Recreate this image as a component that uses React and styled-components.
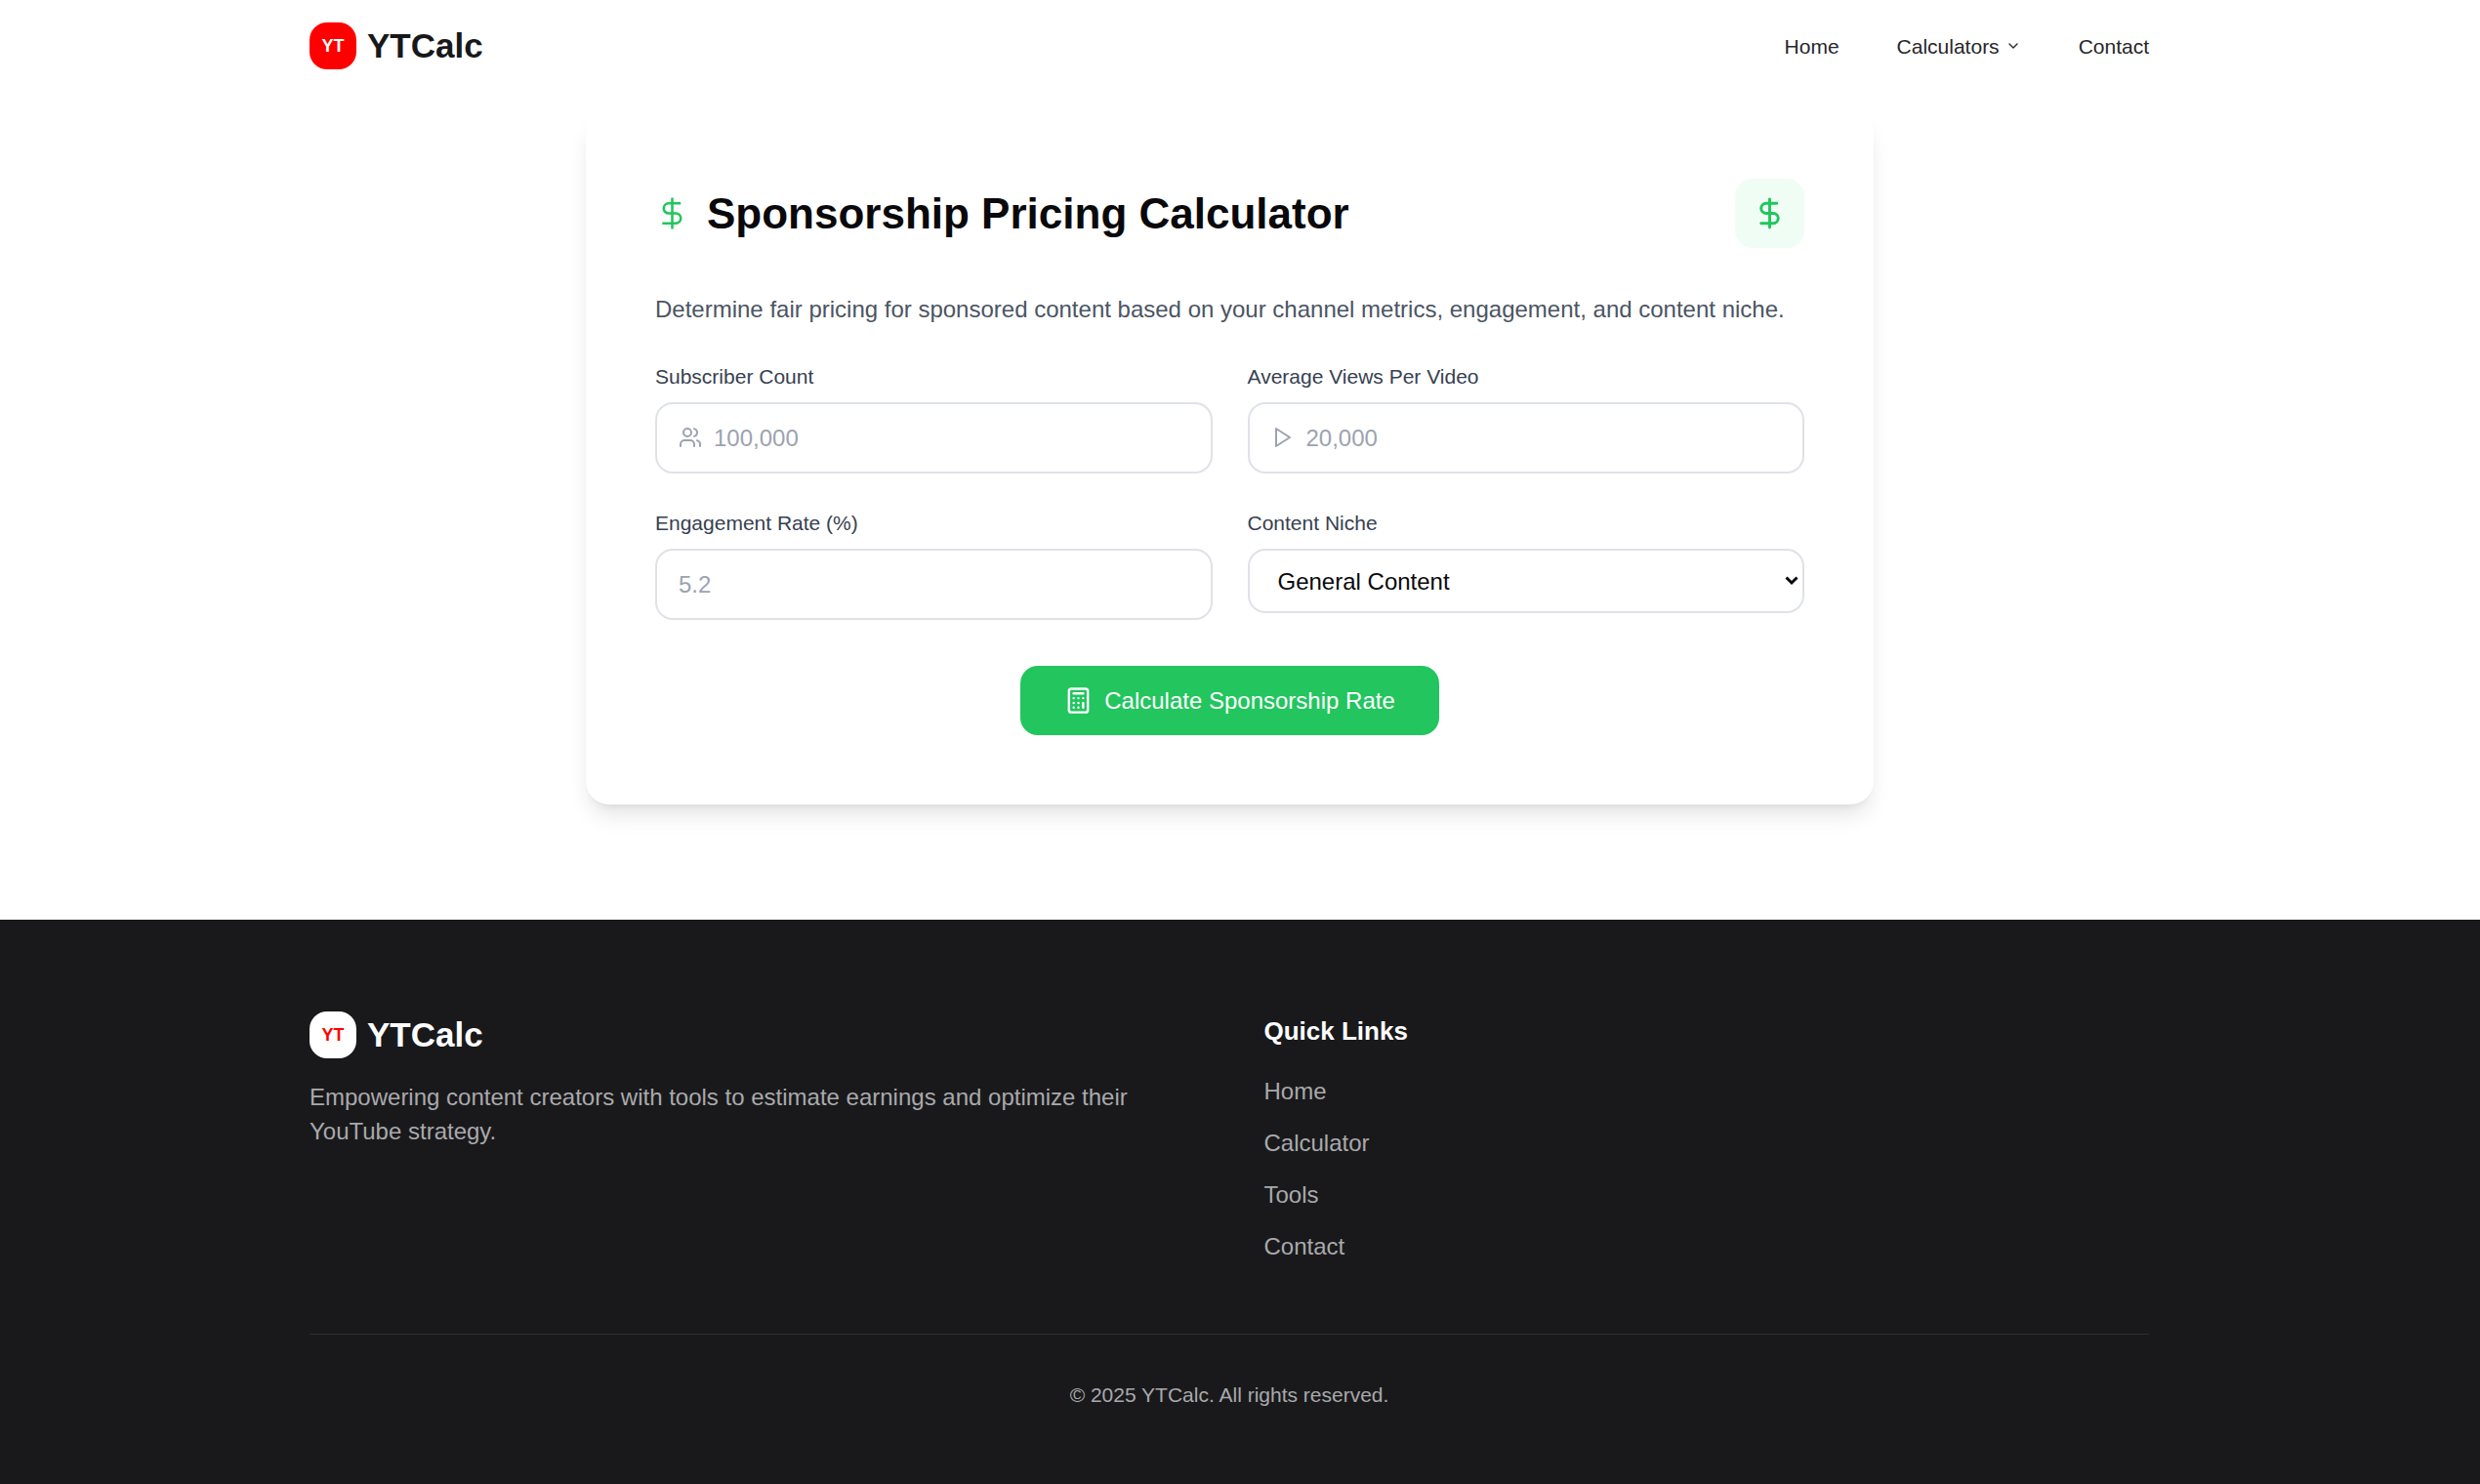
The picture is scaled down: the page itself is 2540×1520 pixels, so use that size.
import React from "react";
import styled, { createGlobalStyle } from "styled-components";
import { Calculator, ChevronDown, DollarSign, Users } from "lucide-react";

const GlobalStyle = createGlobalStyle`
  *, *::before, *::after { box-sizing: border-box; }
  html { background: #19191b; }
  body {
    margin: 0;
    font-family: "Liberation Sans", Arial, sans-serif;
    font-size: 24px;
    line-height: 35px;
    color: #09090b;
  }
  h1, h2, p, ul { margin: 0; padding: 0; }
  input, select, button { font: inherit; }
`;

const Page = styled.div`
  display: flex;
  flex-direction: column;
  min-height: 100vh;
  background: #fff;
`;

const Container = styled.div`
  width: 100%;
  max-width: 1884px;
  margin: 0 auto;
`;

const Header = styled.header`
  padding: 0 22px 0 0;
  background: #fff;
`;

const HeaderRow = styled(Container)`
  display: flex;
  align-items: center;
  justify-content: space-between;
  height: 94px;
`;

const Brand = styled.a`
  display: flex;
  align-items: center;
  gap: 11px;
  color: ${(p) => (p.$light ? "#fff" : "#18181b")};
  font-size: 35px;
  font-weight: 700;
  line-height: 48px;
  text-decoration: none;
`;

const BrandMark = styled.span`
  display: flex;
  align-items: center;
  justify-content: center;
  width: 48px;
  height: 48px;
  border-radius: 18px;
  background: ${(p) => (p.$light ? "#fff" : "#f00")};
  color: ${(p) => (p.$light ? "#f00" : "#fff")};
  font-size: 18px;
  line-height: 24px;
`;

const Nav = styled.nav`
  display: flex;
  align-items: center;
  gap: 59px;
  font-size: 21px;
`;

const NavLink = styled.a`
  color: #27272a;
  text-decoration: none;
`;

const NavButton = styled.button`
  display: flex;
  align-items: center;
  gap: 6px;
  padding: 0;
  border: 0;
  background: none;
  color: #27272a;
`;

const Main = styled.main`
  flex: none;
  padding: 18px 21px 118px 0;
`;

const Card = styled.section`
  max-width: 1319px;
  margin: 0 auto;
  padding: 71px;
  border-radius: 24px;
  background: #fff;
  box-shadow: 0 15px 22px -4px rgba(0, 0, 0, 0.1), 0 6px 9px -6px rgba(0, 0, 0, 0.1);
`;

const CardHead = styled.div`
  display: flex;
  align-items: center;
  justify-content: space-between;
  margin-bottom: 45px;
  color: #22c55e;
`;

const TitleGroup = styled.div`
  display: flex;
  align-items: center;
  gap: 18px;
`;

const Title = styled.h1`
  color: #09090b;
  font-size: 44px;
  font-weight: 700;
  line-height: 51px;
`;

const IconTile = styled.div`
  display: flex;
  align-items: center;
  justify-content: center;
  width: 71px;
  height: 71px;
  border-radius: 18px;
  background: #f0fdf4;
`;

const Description = styled.p`
  margin-bottom: 37px;
  color: #4b5563;
`;

const FieldGrid = styled.div`
  display: grid;
  grid-template-columns: 1fr 1fr;
  align-items: start;
  gap: 36px;
`;

const Field = styled.div`
  display: flex;
  flex-direction: column;
  gap: 12px;
`;

const Label = styled.label`
  color: #374151;
  font-size: 21px;
  line-height: 29px;
`;

const InputWrap = styled.div`
  position: relative;
  color: #9ca3af;

  svg {
    position: absolute;
    top: 24px;
    left: 24px;
  }
`;

const Input = styled.input`
  display: block;
  width: 100%;
  height: 73px;
  padding: 0 22px 0 ${(p) => (p.$icon ? "58px" : "22px")};
  border: 2px solid #dfe2e7;
  border-radius: 18px;
  background: #fff;
  color: #09090b;

  &::placeholder { color: #9ca3af; opacity: 1; }
`;

const SelectWrap = styled.div`
  position: relative;

  svg {
    position: absolute;
    top: 28px;
    right: 6px;
    pointer-events: none;
  }
`;

const Select = styled.select`
  appearance: none;
  display: block;
  width: 100%;
  height: 66px;
  padding: 0 22px 0 29px;
  border: 2px solid #dfe2e7;
  border-radius: 18px;
  background: #fff;
  color: #09090b;
`;

const Actions = styled.div`
  display: flex;
  justify-content: center;
  margin-top: 47px;
`;

const SubmitButton = styled.button`
  display: flex;
  align-items: center;
  gap: 12px;
  height: 71px;
  padding: 0 45px;
  border: 0;
  border-radius: 18px;
  background: #22c55e;
  color: #fff;
`;

const Footer = styled.footer`
  flex: 1;
  padding: 94px 22px 47px 0;
  background: #19191b;
  color: #a9a9ac;
`;

const FooterGrid = styled.div`
  display: grid;
  grid-template-columns: 1fr 1fr;
  gap: 71px;
  padding-bottom: 72px;
  border-bottom: 1px solid #2f2f31;
`;

const About = styled.p`
  margin-top: 22px;
`;

const FooterTitle = styled.h2`
  margin-bottom: 23px;
  color: #fff;
  font-size: 26px;
  font-weight: 700;
  line-height: 41px;
`;

const LinkList = styled.ul`
  display: flex;
  flex-direction: column;
  gap: 18px;
  list-style: none;
`;

const FooterLink = styled.a`
  display: block;
  color: inherit;
  text-decoration: none;
`;

const Copyright = styled.p`
  margin-top: 47px;
  font-size: 21px;
  line-height: 29px;
  text-align: center;
`;

const footerLinks = ["Home", "Calculator", "Tools", "Contact"];

function Logo({ light }) {
  return (
    <Brand href="#" $light={light}>
      <BrandMark $light={light}>YT</BrandMark>
      YTCalc
    </Brand>
  );
}

function PlayIcon() {
  return (
    <svg
      width="24"
      height="24"
      viewBox="0 0 24 24"
      fill="none"
      stroke="currentColor"
      strokeWidth="2"
      strokeLinecap="round"
      strokeLinejoin="round"
      aria-hidden="true"
    >
      <polygon points="5 3 19 12 5 21 5 3" />
    </svg>
  );
}

function TitleDollarIcon() {
  return (
    <svg width="35" height="35" viewBox="0 0 24 24" fill="none" stroke="currentColor" strokeWidth="1.75" aria-hidden="true">
      <path d="M12 1v22M18 5H9.500a3.500 3.500 0 0 0 0 7h5a3.500 3.500 0 0 1 0 7H5" />
    </svg>
  );
}

function SelectArrow() {
  return (
    <svg width="14" height="10" viewBox="0 0 14 10" fill="none" stroke="#09090b" strokeWidth="3" aria-hidden="true">
      <path d="M1.500 1.500 7 7l5.500-5.500" />
    </svg>
  );
}

export default function App() {
  return (
    <Page>
      <GlobalStyle />
      <Header>
        <HeaderRow>
          <Logo />
          <Nav>
            <NavLink href="#">Home</NavLink>
            <NavButton type="button">
              Calculators
              <ChevronDown size={16} />
            </NavButton>
            <NavLink href="#">Contact</NavLink>
          </Nav>
        </HeaderRow>
      </Header>
      <Main>
        <Card>
          <CardHead>
            <TitleGroup>
              <TitleDollarIcon />
              <Title>Sponsorship Pricing Calculator</Title>
            </TitleGroup>
            <IconTile>
              <DollarSign size={35} />
            </IconTile>
          </CardHead>
          <Description>
            Determine fair pricing for sponsored content based on your channel metrics, engagement, and content niche.
          </Description>
          <FieldGrid>
            <Field>
              <Label htmlFor="subscribers">Subscriber Count</Label>
              <InputWrap>
                <Users size={24} />
                <Input id="subscribers" $icon placeholder="100,000" />
              </InputWrap>
            </Field>
            <Field>
              <Label htmlFor="views">Average Views Per Video</Label>
              <InputWrap>
                <PlayIcon />
                <Input id="views" $icon placeholder="20,000" />
              </InputWrap>
            </Field>
            <Field>
              <Label htmlFor="engagement">Engagement Rate (%)</Label>
              <Input id="engagement" placeholder="5.2" />
            </Field>
            <Field>
              <Label htmlFor="niche">Content Niche</Label>
              <SelectWrap>
                <Select id="niche" defaultValue="general">
                  <option value="general">General Content</option>
                </Select>
                <SelectArrow />
              </SelectWrap>
            </Field>
          </FieldGrid>
          <Actions>
            <SubmitButton type="button">
              <Calculator size={29} />
              Calculate Sponsorship Rate
            </SubmitButton>
          </Actions>
        </Card>
      </Main>
      <Footer>
        <Container>
          <FooterGrid>
            <div>
              <Logo light />
              <About>
                Empowering content creators with tools to estimate earnings and optimize their YouTube strategy.
              </About>
            </div>
            <div>
              <FooterTitle>Quick Links</FooterTitle>
              <LinkList>
                {footerLinks.map((name) => (
                  <li key={name}>
                    <FooterLink href="#">{name}</FooterLink>
                  </li>
                ))}
              </LinkList>
            </div>
          </FooterGrid>
          <Copyright>© 2025 YTCalc. All rights reserved.</Copyright>
        </Container>
      </Footer>
    </Page>
  );
}
